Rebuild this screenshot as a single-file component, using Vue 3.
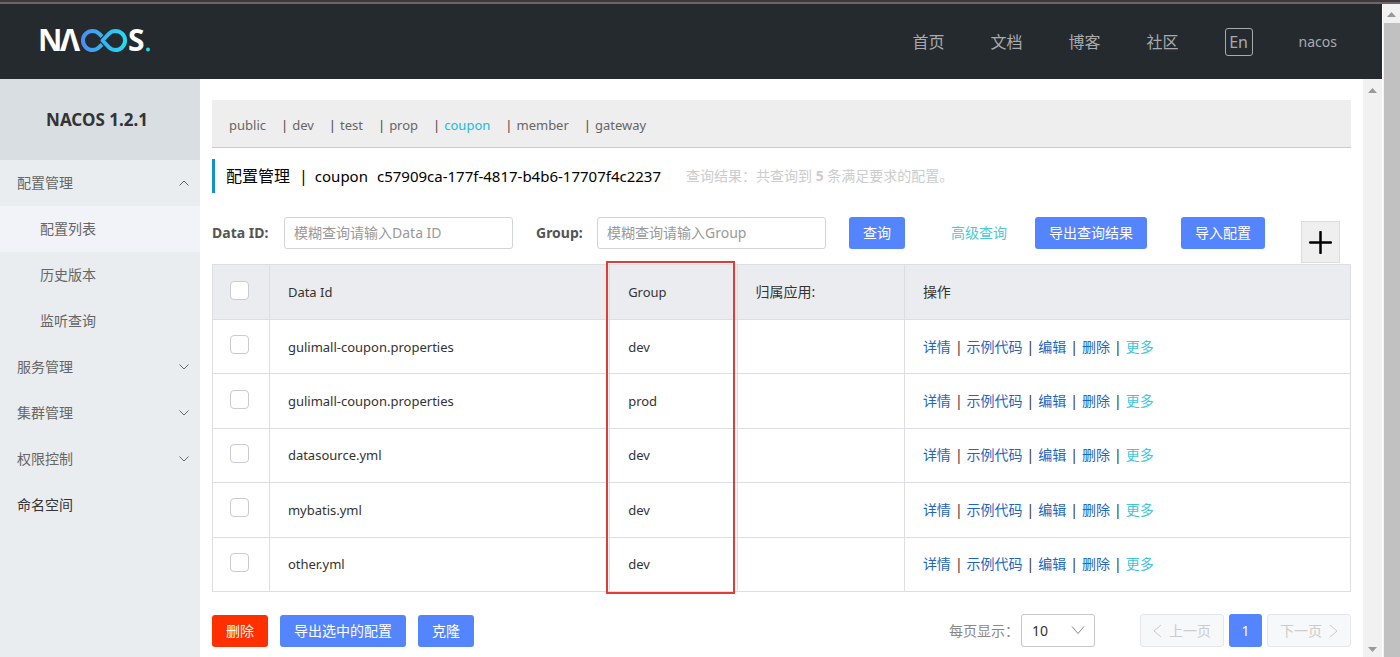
<script setup>
import { ref } from 'vue'

const nav = ['首页', '文档', '博客', '社区']
const subMenu = ['配置列表', '历史版本', '监听查询']
const groups = ['服务管理', '集群管理', '权限控制']
const namespaces = ['public', 'dev', 'test', 'prop', 'coupon', 'member', 'gateway']
const current = ref('coupon')
const rows = [
  { id: 'gulimall-coupon.properties', group: 'dev' },
  { id: 'gulimall-coupon.properties', group: 'prod' },
  { id: 'datasource.yml', group: 'dev' },
  { id: 'mybatis.yml', group: 'dev' },
  { id: 'other.yml', group: 'dev' },
]
const actions = ['详情', '示例代码', '编辑', '删除']
</script>

<template>
  <div class="page">
    <div class="window">
      <header class="header">
        <a href="#" class="logo" aria-label="NACOS">
          <svg width="112" height="26" viewBox="0 0 112 26">
            <defs>
              <linearGradient id="loop" x1="42" x2="88" y1="0" y2="0" gradientUnits="userSpaceOnUse">
                <stop offset="0" stop-color="#4a8cf5" />
                <stop offset="1" stop-color="#24dcf0" />
              </linearGradient>
            </defs>
            <text class="mark" x="-1" y="22">N</text>
            <text class="mark" x="21" y="22">Λ</text>
            <path d="M63 7.500L60.200 4.800A9.500 9.500 0 1 0 60.200 18.200L63 15.500M63.500 11.500L69.800 4.800A9.500 9.500 0 1 1 69.800 18.200Z" fill="none" stroke="url(#loop)" stroke-width="4" stroke-linejoin="round" />
            <text class="mark" x="89" y="22">S</text>
            <circle cx="109" cy="20.500" r="2" fill="#24dcf0" />
          </svg>
        </a>
        <nav class="nav">
          <a v-for="n in nav" :key="n" href="#">{{ n }}</a>
          <button class="lang">En</button>
          <a href="#" class="user">nacos</a>
        </nav>
      </header>
      <div class="body">
        <aside class="side">
          <h1>NACOS 1.2.1</h1>
          <button class="item">配置管理
            <svg width="10" height="6" viewBox="0 0 10 6"><path d="M.5 5.500L5 1l4.500 4.500" /></svg>
          </button>
          <a v-for="(s, i) in subMenu" :key="s" href="#" class="item sub" :class="{ active: i === 0 }">{{ s }}</a>
          <button v-for="g in groups" :key="g" class="item">{{ g }}
            <svg width="10" height="6" viewBox="0 0 10 6"><path d="M.5 .5L5 5l4.500-4.500" /></svg>
          </button>
          <a href="#" class="item dark">命名空间</a>
        </aside>
        <main class="main">
          <div class="spaces">
            <template v-for="(n, i) in namespaces" :key="n">
              <span v-if="i" class="bar">|</span>
              <button :class="{ on: n === current }" @click="current = n">{{ n }}</button>
            </template>
          </div>
          <div class="title">
            <h2>配置管理</h2><span>|</span><span class="name">coupon</span><span class="uuid">c57909ca-177f-4817-b4b6-17707f4c2237</span>
            <span class="result">查询结果：共查询到 <b>5</b> 条满足要求的配置。</span>
          </div>
          <form class="filter" @submit.prevent>
            <label for="data-id">Data ID:</label>
            <input id="data-id" type="text" placeholder="模糊查询请输入Data ID">
            <label for="group" class="second">Group:</label>
            <input id="group" type="text" placeholder="模糊查询请输入Group">
            <button class="btn search">查询</button>
            <a href="#" class="advanced">高级查询</a>
            <button type="button" class="btn export">导出查询结果</button>
            <button type="button" class="btn import">导入配置</button>
            <button type="button" class="plus" aria-label="新建配置">
              <svg width="23" height="23" viewBox="0 0 23 23"><path d="M11.500 1v21M1 11.500h21" /></svg>
            </button>
          </form>
          <div class="grid">
            <table>
              <colgroup><col class="c1"><col class="c2"><col class="c3"><col class="c4"><col></colgroup>
              <thead>
                <tr>
                  <th><input type="checkbox" aria-label="全选"></th>
                  <th>Data Id</th><th>Group</th><th>归属应用:</th><th>操作</th>
                </tr>
              </thead>
              <tbody>
                <tr v-for="(r, i) in rows" :key="i">
                  <td><input type="checkbox" :aria-label="r.id"></td>
                  <td>{{ r.id }}</td><td>{{ r.group }}</td><td></td>
                  <td>
                    <div class="acts">
                      <template v-for="a in actions" :key="a"><a href="#">{{ a }}</a><span>|</span></template>
                      <a href="#" class="more">更多</a>
                    </div>
                  </td>
                </tr>
              </tbody>
            </table>
            <div class="highlight"></div>
          </div>
          <footer class="foot">
            <button class="btn danger">删除</button>
            <button class="btn">导出选中的配置</button>
            <button class="btn">克隆</button>
            <label for="size" class="size-label">每页显示：</label>
            <span class="select">
              <select id="size"><option>10</option><option>20</option></select>
              <svg width="14" height="8" viewBox="0 0 14 8"><path d="M1 .5l6 7 6-7" /></svg>
            </span>
            <button class="pg" disabled><svg width="9" height="14" viewBox="0 0 9 14"><path d="M8 1L1 7l7 6" /></svg>上一页</button>
            <button class="btn num">1</button>
            <button class="pg" disabled>下一页<svg width="9" height="14" viewBox="0 0 9 14"><path d="M1 1l7 6-7 6" /></svg></button>
          </footer>
        </main>
        <div class="scroll inner">
          <svg width="9" height="5" viewBox="0 0 9 5"><path d="M0 5L4.500 0 9 5z" /></svg>
          <svg width="9" height="5" viewBox="0 0 9 5"><path d="M0 0L4.500 5 9 0z" /></svg>
        </div>
      </div>
    </div>
    <div class="scroll outer">
      <svg width="9" height="5" viewBox="0 0 9 5"><path d="M0 5L4.500 0 9 5z" /></svg>
      <div class="thumb"></div>
    </div>
  </div>
</template>

<style>
body { background: #fff; }
</style>

<style scoped>
* { box-sizing: border-box; }
.page {
  display: flex; height: 100vh; overflow: hidden; padding-top: 4px;
  background: linear-gradient(#3f393e 2px, #6a6669 2px, #6a6669 4px, #fff 4px);
  font: 14px/20px "Noto Sans", "Noto Sans CJK SC", sans-serif; color: #333;
}
button, input, select { font: inherit; color: inherit; margin: 0; }
button { border: 0; padding: 0; background: none; cursor: pointer; }
a { text-decoration: none; color: inherit; }
svg { display: block; fill: none; stroke: currentColor; flex: none; }
.window { flex: 1; min-width: 0; display: flex; flex-direction: column; }
.header {
  height: 75px; flex: none; background: #252a2f; display: flex; justify-content: space-between;
  align-items: center; padding: 0 45px 0 39px; color: #a8aaac;
}
.logo svg { stroke: none; overflow: visible; }
.mark { font: 700 30px "Noto Sans", sans-serif; fill: #fff; }
.nav { display: flex; align-items: center; font-size: 16px; gap: 46px; }
.nav .lang { width: 28px; height: 28px; border: 1px solid #a8aaac; border-radius: 3px; line-height: 24px; }
.nav .user { font-size: 14px; }
.body { flex: 1; min-height: 0; display: flex; }
.side { width: 200px; flex: none; background: #e9edf0; display: flex; flex-direction: column; color: #666; }
.side h1 {
  margin: 0; height: 81px; background: #d8dee2; color: #333; font-size: 17px; line-height: 81px;
  padding-right: 6px; text-align: center;
}
.item { height: 46px; flex: none; padding: 0 11px 0 17px; display: flex; align-items: center; justify-content: space-between; text-align: left; }
.sub { padding-left: 40px; }
.active { background: #f1f3f8; }
.dark { color: #333; }
.main { flex: 1; min-width: 0; padding: 21px 12px 0; }
.spaces { height: 48px; background: #eee; border-bottom: 1px solid #ccc; display: flex; align-items: center; padding: 3px 17px 0; color: #666; font-size: 13px; }
.bar { margin: 0 4px 0 15px; color: #444; }
.on { color: #22b8dd; }
.title { margin-top: 11px; height: 34px; border-left: 3px solid #1194bf; padding-left: 11px; display: flex; align-items: center; font-size: 16px; color: #000; white-space: nowrap; }
.title h2 { margin: 0 9px 0 0; font: inherit; }
.name, .uuid { font-size: 15px; }
.name { margin: 0 9px 0 7px; }
.result { font-size: 14px; color: #ccc; margin-left: 25px; }
.filter { display: flex; margin-top: 24px; height: 47px; align-items: flex-start; line-height: 32px; }
.filter label { width: 72px; font-weight: 700; color: #555; flex: none; }
.filter .second { width: 61px; margin-left: 23px; }
.filter input { width: 229px; height: 32px; border: 1px solid #d0d3d8; border-radius: 3px; padding: 0 9px; outline: 0; }
.filter input::placeholder { color: #999; }
.btn { background: #5584ff; color: #fff; border-radius: 3px; height: 32px; padding: 0 14px; flex: none; white-space: nowrap; }
.search { margin-left: 23px; }
.advanced { color: #4bc8d4; margin-left: 46px; white-space: nowrap; }
.export { margin-left: 28px; }
.import { margin-left: 34px; }
.plus { width: 39px; height: 42px; background: #efefef; border: 1px solid #ddd; margin: 4px 11px 0 auto; display: grid; place-items: center; color: #000; flex: none; }
.plus svg { stroke-width: 2.5; stroke-linecap: round; }
.grid { position: relative; }
table { width: 100%; height: 328px; table-layout: fixed; border-collapse: collapse; }
.c1 { width: 5%; }
.c2 { width: 29.900%; }
.c3 { width: 11.200%; }
.c4 { width: 14.700%; }
th, td { height: 54px; padding: 0 18px; border: 1px solid #dcdee3; text-align: left; font-weight: 400; }
th { background: #ebecf0; height: 55px; }
th:first-child, td:first-child { padding: 0 17px; }
th:nth-child(2), th:nth-child(3), td:nth-child(2), td:nth-child(3) { font-size: 13px; }
input[type="checkbox"] { appearance: none; display: block; width: 19px; height: 19px; border: 1px solid #c8cbd2; border-radius: 4px; background: #fff; margin: 0 0 4px; }
.acts { display: flex; gap: 4px; color: #333; }
.acts a { color: #1f66bd; }
.acts .more { color: #3fc5dc; }
.highlight { position: absolute; top: -3px; bottom: -2px; left: 34.600%; width: 11.300%; border: 2px solid #e03c38; pointer-events: none; }
.foot { display: flex; align-items: center; margin-top: 22px; }
.foot .btn + .btn { margin-left: 12px; }
.danger { background: #ff3000; }
.size-label { margin-left: auto; margin-right: 2px; color: #888; }
.select { position: relative; margin-right: 45px; }
.select select { appearance: none; width: 74px; height: 33px; border: 1px solid #c4c6cf; border-radius: 3px; background: #fff; padding: 0 10px; display: block; }
.select svg { position: absolute; right: 10px; top: 12px; color: #888; pointer-events: none; }
.pg { height: 33px; border: 1px solid #e6e7eb; border-radius: 3px; background: #f7f8fa; color: #ccc; display: flex; align-items: center; gap: 7px; padding: 0 12px; }
.num { margin: 0 5px; padding: 0; width: 33px; height: 33px; }
.scroll { background: #f1f1f1; display: flex; flex-direction: column; align-items: center; flex: none; }
.scroll svg { stroke: none; fill: #999; }
.inner { width: 19px; justify-content: space-between; padding: 9px 0 5px; }
.outer { width: 18px; padding-top: 8px; border-left: 1px solid #fff; }
.thumb { width: 16px; flex: 1; background: #c1c1c1; margin-top: 6px; }
</style>
